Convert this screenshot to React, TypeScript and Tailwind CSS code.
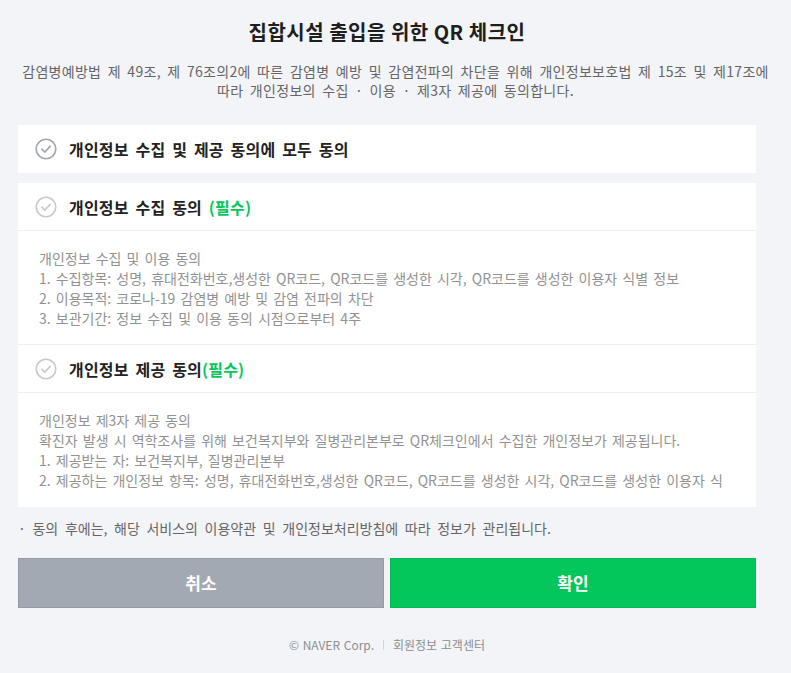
import React from "react";

const font = {
  fontFamily: '"Noto Sans CJK KR", "Noto Sans", sans-serif',
};

function CheckCircle({ dark }: { dark?: boolean }) {
  const color = dark ? "#a2a6ae" : "#c6c9cf";
  return (
    <svg width="22" height="22" viewBox="0 0 22 22" fill="none">
      <circle cx="11" cy="11" r="9.8" stroke={color} strokeWidth="1.6" />
      <path
        d="M6.8 11.2 L9.8 14.1 L15.2 8.4"
        stroke={color}
        strokeWidth="1.6"
        strokeLinecap="round"
        strokeLinejoin="round"
      />
    </svg>
  );
}

function AgreeRow({
  label,
  required,
  dark,
  spaced = true,
  border,
}: {
  label: string;
  required?: boolean;
  dark?: boolean;
  spaced?: boolean;
  border?: boolean;
}) {
  return (
    <div
      className={`flex h-[48px] items-center gap-[12px] pl-[17px] ${
        border ? "border-b border-[#efefef]" : ""
      }`}
    >
      <CheckCircle dark={dark} />
      <span className="text-[16px] font-bold tracking-[0.2px] text-[#222] [word-spacing:3px]">
        {label}
        {required && (
          <span className="text-[#03c75a]">{spaced ? " (필수)" : "(필수)"}</span>
        )}
      </span>
    </div>
  );
}

const collectLines = [
  "개인정보 수집 및 이용 동의",
  "1. 수집항목: 성명, 휴대전화번호,생성한 QR코드, QR코드를 생성한 시각, QR코드를 생성한 이용자 식별 정보",
  "2. 이용목적: 코로나-19 감염병 예방 및 감염 전파의 차단",
  "3. 보관기간: 정보 수집 및 이용 동의 시점으로부터 4주",
];

const provideLines = [
  "개인정보 제3자 제공 동의",
  "확진자 발생 시 역학조사를 위해 보건복지부와 질병관리본부로 QR체크인에서 수집한 개인정보가 제공됩니다.",
  "1. 제공받는 자: 보건복지부, 질병관리본부",
  "2. 제공하는 개인정보 항목: 성명, 휴대전화번호,생성한 QR코드, QR코드를 생성한 시각, QR코드를 생성한 이용자 식별 정보",
];

function Terms({ lines, border }: { lines: string[]; border?: boolean }) {
  return (
    <div
      className={`h-[114px] overflow-hidden pl-[21px] pr-[30px] pt-[17px] ${
        border ? "border-b border-[#efefef]" : ""
      }`}
    >
      <div className="h-[80px] overflow-hidden text-[14px] leading-[20px] text-[#929292] [word-spacing:2px]">
        {lines.map((line, i) => (
          <p key={i}>{line}</p>
        ))}
      </div>
    </div>
  );
}

export default function App() {
  return (
    <div className="min-h-[673px] bg-[#f3f4f8]" style={font}>
      <div className="ml-[18px] w-[738px] pt-[19px] text-center text-[20px] font-bold leading-[26px] tracking-[0.5px] text-[#1e1e1e]">
        집합시설 출입을 위한 QR 체크인
      </div>
      <div className="mt-[17px] text-center text-[14px] leading-[19px] tracking-[0.3px] text-[#666] [word-spacing:3px]">
        <p>
          감염병예방법 제 49조, 제 76조의2에 따른 감염병 예방 및 감염전파의 차단을 위해
          개인정보보호법 제 15조 및 제17조에
        </p>
        <p>따라 개인정보의 수집 · 이용 · 제3자 제공에 동의합니다.</p>
      </div>

      <div className="ml-[18px] mt-[25px] w-[738px]">
        <div className="bg-white">
          <AgreeRow label="개인정보 수집 및 제공 동의에 모두 동의" dark />
        </div>

        <div className="mt-[10px] bg-white">
          <AgreeRow label="개인정보 수집 동의" required border />
          <Terms lines={collectLines} border />
          <AgreeRow label="개인정보 제공 동의" required spaced={false} border />
          <Terms lines={provideLines} />
        </div>

        <p className="mt-[12px] text-[14px] leading-[18px] text-[#666] [word-spacing:3.5px]">
          · 동의 후에는, 해당 서비스의 이용약관 및 개인정보처리방침에 따라 정보가 관리됩니다.
        </p>

        <div className="mt-[21px] flex gap-[6px]">
          <button className="flex h-[50px] w-[366px] items-center justify-center border border-[#959ba6] bg-[#a3a9b3] text-[17px] font-bold text-white">
            취소
          </button>
          <button className="flex h-[50px] flex-1 items-center justify-center border border-[#04b955] bg-[#03c75a] text-[17px] font-bold text-white">
            확인
          </button>
        </div>

        <div className="mt-[28px] flex items-center justify-center gap-[9px] text-[12px] leading-[18px] text-[#8e8e8e] [word-spacing:1px]">
          <span>© NAVER Corp.</span>
          <span className="h-[10px] w-px bg-[#d5d5d5]" />
          <span>회원정보 고객센터</span>
        </div>
      </div>
    </div>
  );
}
